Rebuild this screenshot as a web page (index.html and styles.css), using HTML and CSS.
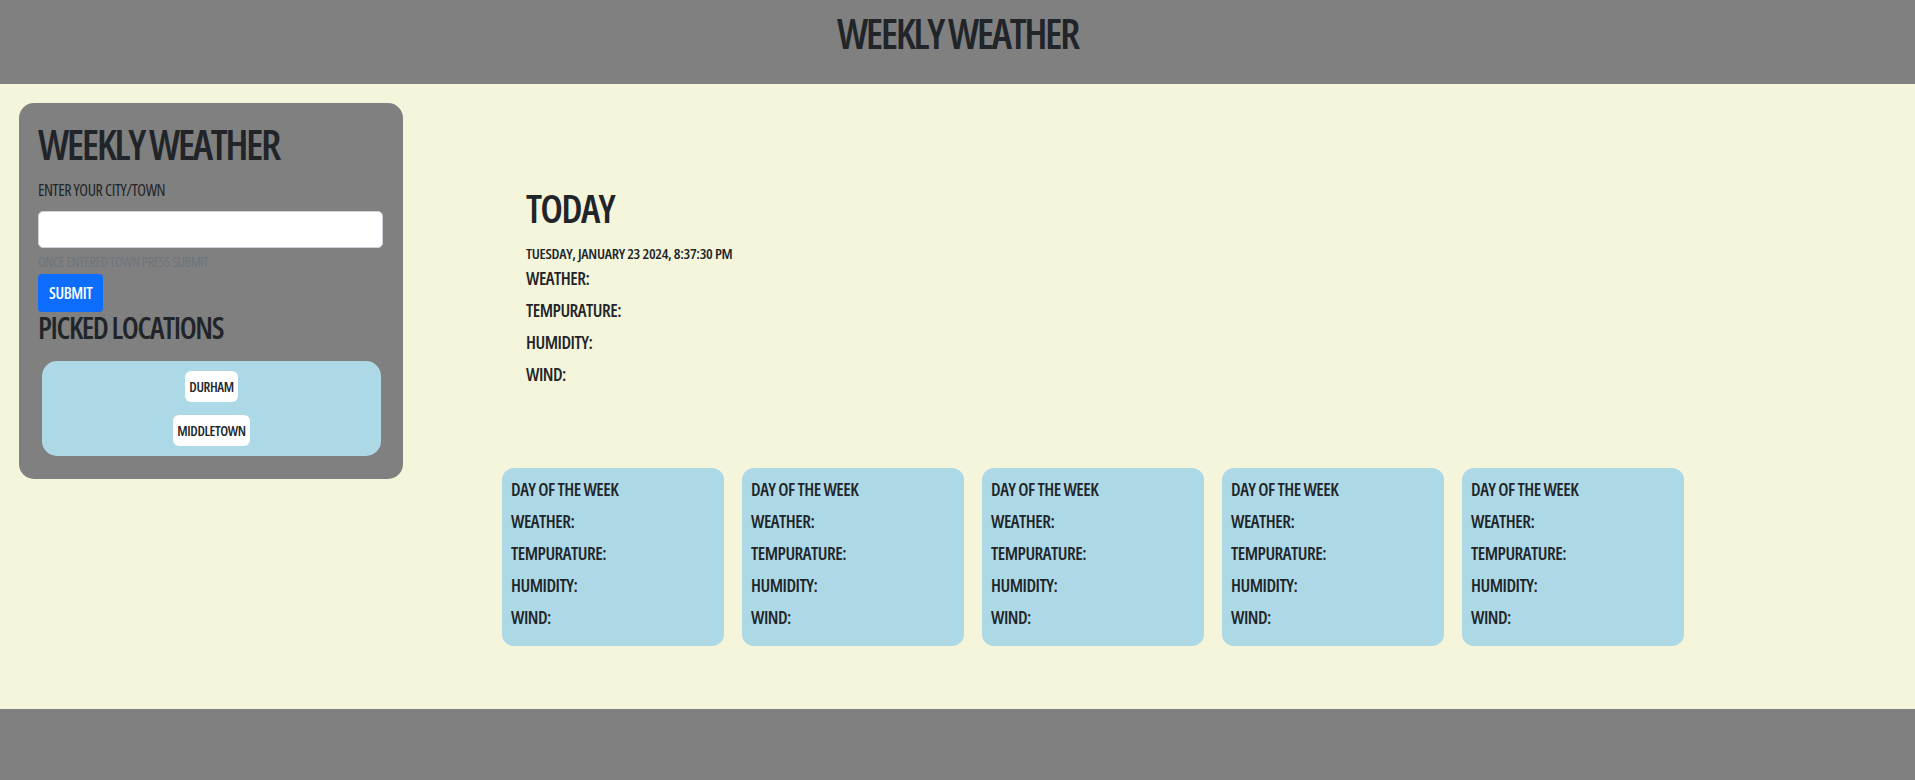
FILE: index.html
```html
<!DOCTYPE html>
<html lang="en">
<head>
<meta charset="utf-8">
<title>Weekly Weather</title>
<link rel="stylesheet" href="styles.css">
</head>
<body>
<header class="site-header">
  <h1 class="site-title">Weekly Weather</h1>
</header>
<main class="layout">
  <aside class="sidebar">
    <h2 class="sidebar-title">Weekly Weather</h2>
    <label class="field-label" for="city">Enter your city/town</label>
    <input class="field-input" id="city" type="text">
    <div class="field-help">Once entered town press submit</div>
    <button class="submit-btn" type="button">Submit</button>
    <h3 class="picked-title">Picked Locations</h3>
    <div class="picked-box">
      <button class="city-btn" type="button">Durham</button>
      <button class="city-btn" type="button">Middletown</button>
    </div>
  </aside>
  <section class="content">
    <div class="today">
      <h2 class="today-title">Today</h2>
      <div class="today-date">Tuesday, January 23 2024, 8:37:30 PM</div>
      <p class="stat">Weather:</p>
      <p class="stat">Tempurature:</p>
      <p class="stat">Humidity:</p>
      <p class="stat">Wind:</p>
    </div>
    <div class="forecast">
      <div class="day-card">
        <p class="stat">Day of the week</p>
        <p class="stat">Weather:</p>
        <p class="stat">Tempurature:</p>
        <p class="stat">Humidity:</p>
        <p class="stat">Wind:</p>
      </div>
      <div class="day-card">
        <p class="stat">Day of the week</p>
        <p class="stat">Weather:</p>
        <p class="stat">Tempurature:</p>
        <p class="stat">Humidity:</p>
        <p class="stat">Wind:</p>
      </div>
      <div class="day-card">
        <p class="stat">Day of the week</p>
        <p class="stat">Weather:</p>
        <p class="stat">Tempurature:</p>
        <p class="stat">Humidity:</p>
        <p class="stat">Wind:</p>
      </div>
      <div class="day-card">
        <p class="stat">Day of the week</p>
        <p class="stat">Weather:</p>
        <p class="stat">Tempurature:</p>
        <p class="stat">Humidity:</p>
        <p class="stat">Wind:</p>
      </div>
      <div class="day-card">
        <p class="stat">Day of the week</p>
        <p class="stat">Weather:</p>
        <p class="stat">Tempurature:</p>
        <p class="stat">Humidity:</p>
        <p class="stat">Wind:</p>
      </div>
    </div>
  </section>
</main>
<footer class="site-footer"></footer>
</body>
</html>
```

FILE: styles.css
```css
* { box-sizing: border-box; }

html, body {
  margin: 0;
  height: 100%;
}

body {
  display: flex;
  flex-direction: column;
  background: #f5f5dc;
  color: #212529;
  font-family: "Open Sans", "DejaVu Sans Condensed", sans-serif;
  font-stretch: 75%;
  font-weight: 600;
  text-transform: uppercase;
  white-space: nowrap;
}

.site-header {
  height: 84px;
  background: #808080;
  padding-top: 8px;
  text-align: center;
  flex-shrink: 0;
}

.site-title {
  margin: 0;
  font-size: 42px;
  line-height: 50px;
  font-weight: 600;
  letter-spacing: -2.4px;
}

.layout {
  flex: 1;
  display: flex;
  align-items: flex-start;
  padding: 19px;
}

.sidebar {
  width: 384px;
  flex-shrink: 0;
  background: #808080;
  border-radius: 15px;
  padding: 16px 19px 23px 19px;
  display: flex;
  flex-direction: column;
  align-items: flex-start;
}

.sidebar-title {
  margin: 0;
  font-size: 42px;
  line-height: 50px;
  font-weight: 600;
  letter-spacing: -2.4px;
}

.field-label {
  margin-top: 11px;
  font-size: 16px;
  line-height: 20px;
  font-weight: 500;
  letter-spacing: -0.4px;
}

.field-input {
  margin-top: 11px;
  width: 345px;
  height: 37px;
  border: 1px solid #ced4da;
  border-radius: 5px;
  background: #fff;
}

.field-help {
  margin-top: 5px;
  font-size: 14px;
  line-height: 18px;
  font-weight: 500;
  color: #6c757d;
  letter-spacing: -0.3px;
}

.submit-btn {
  margin-top: 3px;
  height: 38px;
  padding: 0 11px;
  border: none;
  border-radius: 4px;
  background: #0d6efd;
  color: #fff;
  font-family: inherit;
  font-stretch: 75%;
  font-weight: 600;
  font-size: 16px;
  letter-spacing: -0.4px;
  text-transform: uppercase;
}

.picked-title {
  margin: 0;
  font-size: 30px;
  line-height: 32px;
  font-weight: 600;
  letter-spacing: -1.4px;
}

.picked-box {
  margin: 17px 3px 0 4px;
  align-self: stretch;
  background: #add8e6;
  border-radius: 15px;
  padding: 10px;
  display: flex;
  flex-direction: column;
  align-items: center;
  gap: 13px;
}

.city-btn {
  height: 31px;
  padding: 0 4px;
  border: none;
  border-radius: 6px;
  background: #fff;
  color: #212529;
  font-family: inherit;
  font-stretch: 75%;
  font-weight: 600;
  font-size: 14px;
  letter-spacing: -0.4px;
  text-transform: uppercase;
}

.content {
  flex: 1;
  padding-left: 99px;
}

.today {
  margin-top: 81px;
  padding-left: 24px;
}

.today-title {
  margin: 0;
  font-size: 40px;
  line-height: 48px;
  font-weight: 600;
  letter-spacing: -1.8px;
}

.today-date {
  margin-top: 12px;
  font-size: 15px;
  line-height: 18px;
  letter-spacing: -0.3px;
}

.stat {
  margin: 0;
  font-size: 18px;
  line-height: 32px;
  letter-spacing: -0.5px;
}

.forecast {
  margin-top: 78px;
  display: flex;
  gap: 18px;
}

.day-card {
  width: 222px;
  background: #add8e6;
  border-radius: 12px;
  padding: 5px 9px 13px 9px;
}

.site-footer {
  height: 71px;
  background: #808080;
  flex-shrink: 0;
}
```
